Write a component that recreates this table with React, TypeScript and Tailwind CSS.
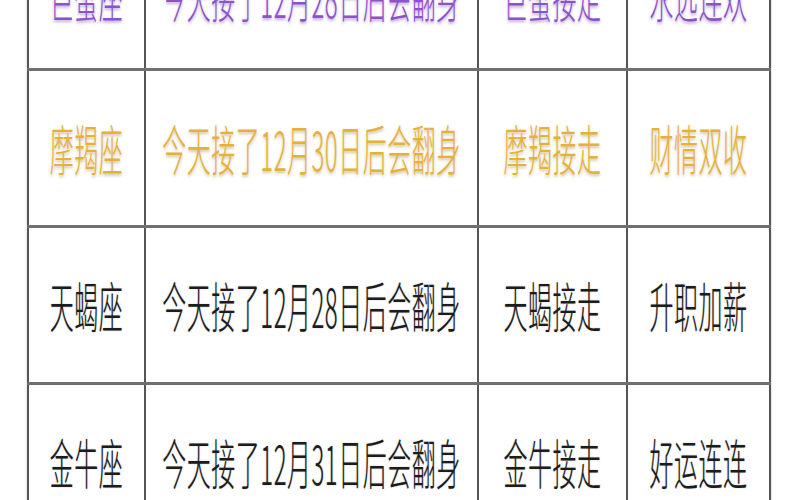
const rows = [
  { cells: ["巨蟹座", "今天接了12月28日后会翻身", "巨蟹接走", "永远连欢"], tone: "text-[#8d52c9] [text-shadow:0_1px_2px_rgba(90,40,160,0.4)]" },
  { cells: ["摩羯座", "今天接了12月30日后会翻身", "摩羯接走", "财情双收"], tone: "text-[#e4b23a] [text-shadow:0_1px_2px_rgba(150,100,20,0.4)]" },
  { cells: ["天蝎座", "今天接了12月28日后会翻身", "天蝎接走", "升职加薪"], tone: "text-[#1c1c1c] [text-shadow:0_0_1px_rgba(0,0,0,0.3)]" },
  { cells: ["金牛座", "今天接了12月31日后会翻身", "金牛接走", "好运连连"], tone: "text-[#1c1c1c] [text-shadow:0_0_1px_rgba(0,0,0,0.3)]" },
];

export default function App() {
  return (
    <div
      className="w-[800px] h-[500px] overflow-hidden bg-white"
      style={{ fontFamily: '"Noto Sans CJK SC", "Noto Sans", sans-serif' }}
    >
      <div className="ml-[27px] mt-[-86px] w-[744px]">
        {rows.map((row, i) => (
          <div
            key={i}
            className="grid grid-cols-[117px_333px_149px_145px] h-[157px] border-b-[3px] border-[#707070] shadow-[0_1px_2px_rgba(0,0,0,0.25)]"
          >
            {row.cells.map((text, j) => (
              <div
                key={j}
                className={
                  "flex items-center justify-center border-l-2 border-[#555] bg-white " +
                  (j === 3 ? "border-r-2 " : "") +
                  (i === 0 ? "pt-[8px]" : "")
                }
              >
                <span className={"inline-block text-[24px] font-light tracking-[0.5px] leading-none scale-y-[2.25] whitespace-nowrap " + row.tone}>
                  {text}
                </span>
              </div>
            ))}
          </div>
        ))}
      </div>
    </div>
  );
}
